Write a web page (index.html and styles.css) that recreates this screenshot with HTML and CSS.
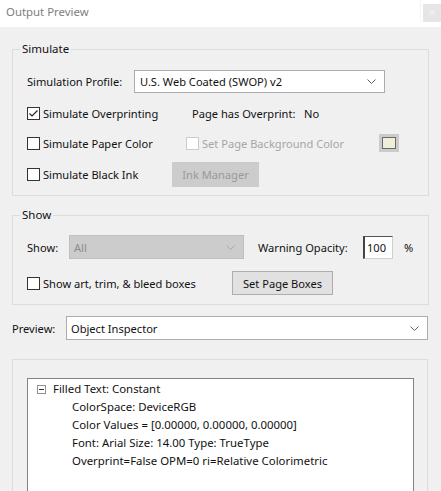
FILE: index.html
```
<!DOCTYPE html>
<html>
<head>
<meta charset="utf-8">
<link rel="stylesheet" href="styles.css">
</head>
<body>
<div class="window">
  <div class="titlebar">
    <span class="title">Output Preview</span>
    <span class="tb-right"><span class="tb-sep"></span><span class="close">×</span></span>
  </div>
  <div class="body">
    <section class="group simulate">
      <div class="group-title">Simulate</div>
      <div class="row r1">
        <span class="cell w107">Simulation Profile:</span>
        <div class="select profile"><span class="sel-text">U.S. Web Coated (SWOP) v2</span><svg class="chev" width="9" height="5" viewBox="0 0 9 5"><path d="M0.5 0.5 L4.5 4.5 L8.5 0.5" fill="none" stroke="#606060" stroke-width="1"/></svg></div>
      </div>
      <div class="row r2">
        <span class="cell w165 check"><span class="box checked"><svg width="11" height="11" viewBox="0 0 11 11"><path d="M1.5 5.5 L4 8 L9.5 2.5" fill="none" stroke="#222" stroke-width="1.2"/></svg></span>Simulate Overprinting</span>
        <span class="cell w112">Page has Overprint:</span>
        <span class="cell">No</span>
      </div>
      <div class="row r3">
        <span class="cell w159 check"><span class="box"></span>Simulate Paper Color</span>
        <span class="cell w193 check disabled"><span class="box"></span>Set Page Background Color</span>
        <span class="swatch"><span class="swatch-inner"></span></span>
      </div>
      <div class="row r4">
        <span class="cell w145 check"><span class="box"></span>Simulate Black Ink</span>
        <span class="btn btn-disabled ink">Ink Manager</span>
      </div>
    </section>

    <section class="group show">
      <div class="group-title">Show</div>
      <div class="row s1">
        <span class="cell w42">Show:</span>
        <div class="select select-disabled showsel"><span class="sel-text">All</span><svg class="chev" width="9" height="5" viewBox="0 0 9 5"><path d="M0.5 0.5 L4.5 4.5 L8.5 0.5" fill="none" stroke="#a8a8a8" stroke-width="1"/></svg></div>
        <span class="cell w105 warn">Warning Opacity:</span>
        <span class="input">100</span>
        <span class="cell pct">%</span>
      </div>
      <div class="row s2">
        <span class="cell w205 check"><span class="box"></span>Show art, trim, &amp; bleed boxes</span>
        <span class="btn boxes">Set Page Boxes</span>
      </div>
    </section>

    <div class="row preview">
      <span class="cell w54">Preview:</span>
      <div class="select previewsel"><span class="sel-text">Object Inspector</span><svg class="chev" width="9" height="5" viewBox="0 0 9 5"><path d="M0.5 0.5 L4.5 4.5 L8.5 0.5" fill="none" stroke="#606060" stroke-width="1"/></svg></div>
    </div>

    <section class="inspector">
      <div class="tree">
        <div class="node"><span class="minus"><span class="minus-bar"></span></span>Filled Text: Constant</div>
        <div class="children">
          <div class="leaf">ColorSpace: DeviceRGB</div>
          <div class="leaf">Color Values = [0.00000, 0.00000, 0.00000]</div>
          <div class="leaf">Font: Arial Size: 14.00 Type: TrueType</div>
          <div class="leaf">Overprint=False OPM=0 ri=Relative Colorimetric</div>
        </div>
      </div>
    </section>
  </div>
</div>
</body>
</html>
```
FILE: styles.css
```
* { box-sizing: border-box; }
html, body { margin: 0; padding: 0; }
body {
  background: #f0f0f0;
  font-family: "Noto Sans", "Open Sans", sans-serif;
  font-size: 11.1px;
  color: #111;
}
.window { width: 441px; height: 491px; overflow: hidden; background: #f0f0f0; }

.titlebar {
  height: 27px;
  background: #fff;
  display: flex;
  align-items: flex-start;
  justify-content: space-between;
  padding-left: 6px;
}
.title { font-size: 11.4px; color: #808080; line-height: 24px; }
.tb-right { display: flex; align-items: flex-start; }
.tb-sep { width: 1px; height: 22px; background: #f4f4f4; margin-right: 2px; }
.close {
  width: 18px; height: 18px; margin-top: 4px;
  background: #e6e6e6; color: #f4f4f4;
  font-size: 13px; line-height: 17px; text-align: center;
}

.body { display: flex; flex-direction: column; }

.group {
  position: relative;
  border: 1px solid #dcdcdc;
  margin: 0 12px;
  padding-left: 14px;
  display: flex;
  flex-direction: column;
}
.group-title {
  position: absolute;
  top: -9px; left: 7px;
  padding: 0 2px;
  line-height: 16px;
  font-size: 11.5px;
  background: #f0f0f0;
}
.simulate { margin-top: 22px; padding-top: 20px; padding-bottom: 8px; }
.show { margin-top: 19px; padding-top: 19px; padding-bottom: 9px; }

.row { display: flex; align-items: center; }
.r1 { height: 23px; margin-bottom: 10px; }
.r2 { height: 20px; margin-bottom: 10px; }
.r3 { height: 20px; margin-bottom: 9px; }
.r4 { height: 25px; }
.s1 { height: 24px; margin-bottom: 12px; }
.s2 { height: 24px; }

.cell { white-space: nowrap; display: flex; align-items: center; flex: none; }
.w107 { width: 107px; }
.w165 { width: 165px; }
.w112 { width: 112px; }
.w159 { width: 159px; }
.w193 { width: 193px; }
.w145 { width: 145px; }
.w42 { width: 42px; }
.w105 { width: 105px; }
.w205 { width: 205px; }
.w54 { width: 54px; }

.box {
  width: 13px; height: 13px;
  border: 1px solid #333;
  background: #fff;
  margin-right: 3px;
  flex: none;
  display: flex; align-items: center; justify-content: center;
}
.box svg { display: block; }
.disabled { color: #a6a6a6; }
.disabled .box { border-color: #cccccc; }

.select {
  display: flex; align-items: center; justify-content: space-between;
  background: #fff;
  border: 1px solid #adadad;
  padding: 0 8px 0 5px;
  flex: none;
}
.select .chev { display: block; }
.profile { width: 251px; height: 23px; }
.select-disabled { background: #cccccc; border-color: #bfbfbf; color: #8d8d8d; }
.showsel { width: 175px; height: 24px; padding-left: 4px; }
.previewsel { width: 362px; height: 24px; padding-left: 4px; }

.swatch {
  width: 20px; height: 18px;
  background: #cbcbcb;
  padding: 3px;
  display: flex;
}
.swatch-inner { flex: 1; border: 1px solid #6a6a6a; background: #efefd8; }

.btn {
  display: flex; align-items: center; justify-content: center;
  background: #e1e1e1; border: 1px solid #adadad;
  white-space: nowrap; flex: none;
}
.btn-disabled { background: #cccccc; border-color: #cccccc; color: #9a9a9a; }
.ink { width: 87px; height: 25px; }
.boxes { width: 101px; height: 24px; }

.warn { margin-left: 14px; }
.input {
  width: 30px; height: 23px;
  background: #fff;
  border: 1px solid #cfcfcf;
  border-top-color: #555;
  border-left: 2px solid #444;
  padding-left: 2px;
  display: flex; align-items: center;
  flex: none;
}
.pct { margin-left: 11px; }

.preview { margin-top: 11px; padding-left: 12px; height: 24px; }

.inspector {
  margin: 19px 13px 0 12px;
  border: 1px solid #dcdcdc;
  padding: 18px 13px 0 14px;
}
.tree {
  height: 130px;
  background: #fff;
  border: 1px solid #828282;
  padding: 1px 0 0 9px;
  line-height: 18px;
  font-size: 11.4px;
}
.node { display: flex; align-items: center; height: 18px; }
.minus {
  width: 9px; height: 9px;
  border: 1px solid #919191;
  margin-right: 7px;
  display: flex; align-items: center; justify-content: center;
  flex: none;
}
.minus-bar { width: 5px; height: 1px; background: #333; }
.children { padding-left: 35px; }
.leaf { height: 18px; white-space: nowrap; }
```
